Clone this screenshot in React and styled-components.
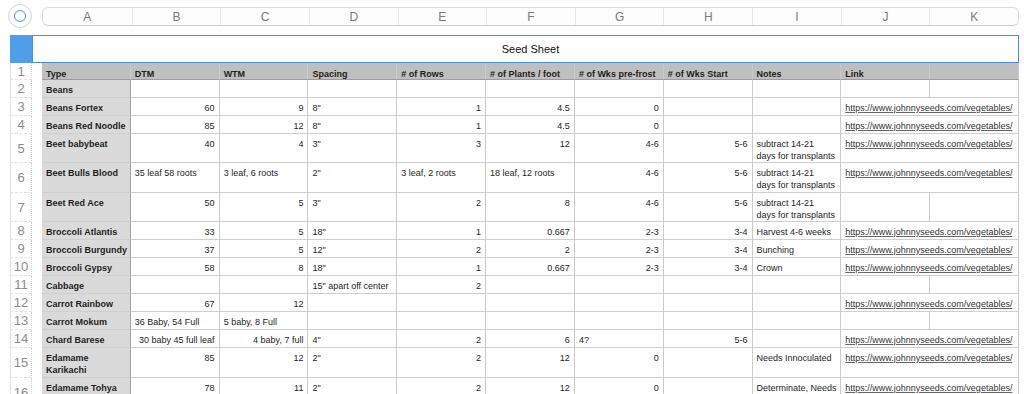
import React from "react";
import styled, { createGlobalStyle } from "styled-components";

const GlobalStyle = createGlobalStyle`
  html, body {
    margin: 0;
    padding: 0;
    background: #ffffff;
    overflow: hidden;
  }
  body {
    font-family: "Liberation Sans", Arial, sans-serif;
    color: #222;
  }
`;

const COL_W = 88.82;
const LETTERS = ["A", "B", "C", "D", "E", "F", "G", "H", "I", "J", "K"];
const LINK = "https://www.johnnyseeds.com/vegetables/";
const NOTE = ["subtract 14-21", "days for transplants"];

const Page = styled.div`
  width: 1024px;
  height: 394px;
  overflow: hidden;
`;

const TopBar = styled.div`
  display: grid;
  grid-template-columns: 42px ${COL_W * 11}px;
  height: 35px;
`;

const CornerButton = styled.div`
  width: 24px;
  height: 24px;
  margin: 4px 0 0 8px;
  border-radius: 50%;
  border: 1px solid #d4d4d4;
  box-sizing: border-box;
  display: flex;
  align-items: center;
  justify-content: center;
  background: #fff;
`;

const CornerRing = styled.div`
  width: 12px;
  height: 12px;
  border-radius: 50%;
  border: 1.5px solid #4a93e6;
  box-sizing: border-box;
`;

const ColumnBar = styled.div`
  display: grid;
  grid-template-columns: repeat(11, 1fr);
  margin-top: 7px;
  height: 19px;
  border: 1px solid #dedede;
  border-bottom-color: #d0d0d0;
  border-radius: 6px;
  box-sizing: border-box;
  background: #fdfdfd;
  overflow: hidden;
`;

const ColumnLetter = styled.div`
  display: flex;
  align-items: center;
  justify-content: center;
  font-size: 12px;
  color: #7a7a7a;
  border-left: ${(p) => (p.$first ? "none" : "1px solid #e6e6e6")};
`;

const TitleRow = styled.div`
  display: grid;
  grid-template-columns: 22px ${10 + COL_W * 11}px;
  margin-left: 10px;
  height: 28px;
`;

const SelectBox = styled.div`
  background: #4f9ee9;
`;

const TitleCell = styled.div`
  border: 1px solid #4a8fd8;
  box-sizing: border-box;
  padding-left: 10px;
  display: flex;
  align-items: center;
  justify-content: center;
  font-size: 11px;
  color: #111;
`;

const Row = styled.div`
  display: grid;
  grid-template-columns: 22px 10px repeat(11, ${COL_W}px);
  margin-left: 10px;
  height: ${(p) => p.$h}px;
`;

const RowNumber = styled.div`
  display: flex;
  align-items: center;
  justify-content: center;
  font-size: 13px;
  color: #8c8c8c;
  border-left: 1px solid #e2e2e2;
  border-right: 1px dotted #cfcfcf;
  border-bottom: 1px dashed #e2e2e2;
  box-sizing: border-box;
`;

const Gutter = styled.div``;

const Cell = styled.div`
  box-sizing: border-box;
  grid-column: span ${(p) => p.$span || 1};
  padding: ${(p) => (p.$head ? "5px" : "4px")} 4px 0 4px;
  font-size: 9px;
  line-height: 12px;
  font-weight: ${(p) => (p.$head || p.$type ? 700 : 400)};
  text-align: ${(p) => p.$align || "left"};
  background: ${(p) => (p.$head ? "#bfbfbf" : p.$type ? "#dadada" : "#fff")};
  border-right: 1px solid ${(p) => (p.$type ? "#a3a3a3" : "#cacaca")};
  border-bottom: 1px solid ${(p) => (p.$head ? "#9c9c9c" : "#cfcfcf")};
  overflow: hidden;
  white-space: nowrap;
  color: #1e1e1e;
`;

const Link = styled.span`
  color: #333;
  text-decoration: underline;
  text-decoration-color: #666;
`;

const headers = [
  "Type",
  "DTM",
  "WTM",
  "Spacing",
  "# of Rows",
  "# of Plants / foot",
  "# of Wks pre-frost",
  "# of Wks Start",
  "Notes",
  "Link",
  "",
];

// a string is a right-aligned number; an array is left-aligned text, one entry per line
const rows = [
  { h: 18, type: ["Beans"], v: ["", "", "", "", "", "", "", ""], link: false },
  { h: 18, type: ["Beans Fortex"], v: ["60", "9", ["8\""], "1", "4.5", "0", "", ""], link: true },
  { h: 18, type: ["Beans Red Noodle"], v: ["85", "12", ["8\""], "1", "4.5", "0", "", ""], link: true },
  { h: 29, type: ["Beet babybeat"], v: ["40", "4", ["3\""], "3", "12", "4-6", "5-6", NOTE], link: true },
  {
    h: 30,
    type: ["Beet Bulls Blood"],
    v: [["35 leaf 58 roots"], ["3 leaf, 6 roots"], ["2\""], ["3 leaf, 2 roots"], ["18 leaf, 12 roots"], "4-6", "5-6", NOTE],
    link: true,
  },
  { h: 29, type: ["Beet Red Ace"], v: ["50", "5", ["3\""], "2", "8", "4-6", "5-6", NOTE], link: false },
  { h: 18, type: ["Broccoli Atlantis"], v: ["33", "5", ["18\""], "1", "0.667", "2-3", "3-4", ["Harvest 4-6 weeks"]], link: true },
  { h: 18, type: ["Broccoli Burgundy"], v: ["37", "5", ["12\""], "2", "2", "2-3", "3-4", ["Bunching"]], link: true },
  { h: 18, type: ["Broccoli Gypsy"], v: ["58", "8", ["18\""], "1", "0.667", "2-3", "3-4", ["Crown"]], link: true },
  { h: 18, type: ["Cabbage"], v: ["", "", ["15\" apart off center"], "2", "", "", "", ""], link: false },
  { h: 18, type: ["Carrot Rainbow"], v: ["67", "12", "", "", "", "", "", ""], link: true },
  { h: 18, type: ["Carrot Mokum"], v: [["36 Baby, 54 Full"], ["5 baby, 8 Full"], "", "", "", "", "", ""], link: false },
  { h: 18, type: ["Chard Barese"], v: ["30 baby 45 full leaf", "4 baby, 7 full", ["4\""], "2", "6", ["4?"], "5-6", ""], link: true },
  { h: 30, type: ["Edamame", "Karikachi"], v: ["85", "12", ["2\""], "2", "12", "0", "", ["Needs Innoculated"]], link: true },
  { h: 30, type: ["Edamame Tohya"], v: ["78", "11", ["2\""], "2", "12", "0", "", ["Determinate, Needs", "Innoculated"]], link: true },
];

const Lines = ({ lines }) =>
  lines.map((line, i) => (
    <React.Fragment key={i}>
      {i > 0 && <br />}
      {line}
    </React.Fragment>
  ));

const renderValue = (val, i) => {
  if (Array.isArray(val)) {
    return (
      <Cell key={i} $align="left">
        <Lines lines={val} />
      </Cell>
    );
  }
  return (
    <Cell key={i} $align="right">
      {val}
    </Cell>
  );
};

const App = () => {
  return (
    <Page>
      <GlobalStyle />
      <TopBar>
        <CornerButton>
          <CornerRing />
        </CornerButton>
        <ColumnBar>
          {LETTERS.map((l, i) => (
            <ColumnLetter key={l} $first={i === 0}>
              {l}
            </ColumnLetter>
          ))}
        </ColumnBar>
      </TopBar>

      <TitleRow>
        <SelectBox />
        <TitleCell>Seed Sheet</TitleCell>
      </TitleRow>

      <Row $h={17}>
        <RowNumber>1</RowNumber>
        <Gutter />
        {headers.map((h, i) => (
          <Cell key={i} $head>
            {h}
          </Cell>
        ))}
      </Row>

      {rows.map((r, idx) => (
        <Row key={idx} $h={r.h}>
          <RowNumber>{idx + 2}</RowNumber>
          <Gutter />
          <Cell $type>
            <Lines lines={r.type} />
          </Cell>
          {r.v.map(renderValue)}
          {r.link ? (
            <Cell $span={2}>
              <Link>{LINK}</Link>
            </Cell>
          ) : (
            <>
              <Cell />
              <Cell />
            </>
          )}
        </Row>
      ))}
    </Page>
  );
};

export default App;
